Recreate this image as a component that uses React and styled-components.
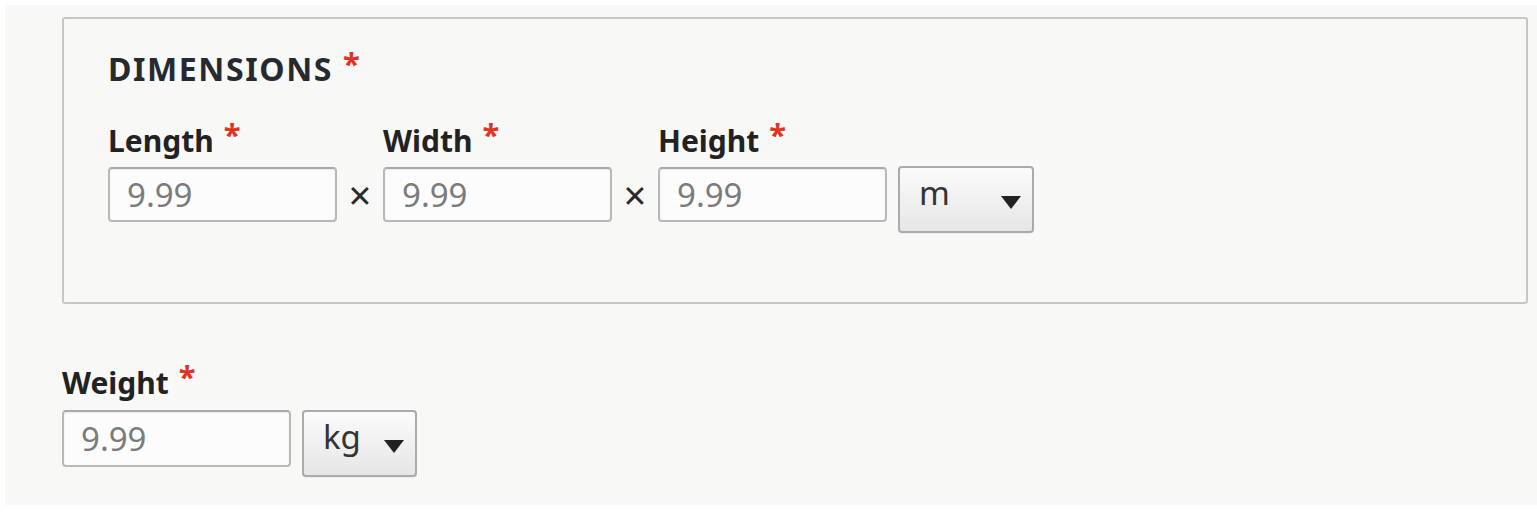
import React from 'react';
import styled, { createGlobalStyle } from 'styled-components';

const GlobalStyle = createGlobalStyle`
  html, body {
    margin: 0;
    padding: 0;
    background: #ffffff;
  }
  body {
    font-family: "Noto Sans", "Open Sans", "DejaVu Sans", sans-serif;
    color: #222;
  }
`;

const Page = styled.div`
  margin: 5px 0 0 5px;
  height: 500px;
  box-sizing: border-box;
  background: #f8f8f7;
  padding: 12px 9px 0 57px;
`;

const Fieldset = styled.div`
  box-sizing: border-box;
  height: 287px;
  border: 2px solid #c6c6c6;
  border-radius: 3px;
  padding: 30px 0 0 44px;
`;

const Legend = styled.div`
  font-size: 32px;
  line-height: 40px;
  font-weight: 700;
  letter-spacing: 0.05em;
  text-transform: uppercase;
  color: #262a30;
`;

const Required = styled.span`
  color: #e2331f;
  font-weight: 700;
  font-size: 31px;
  position: relative;
  top: -6px;
  margin-left: 10px;
  letter-spacing: 0;
`;

const DimensionRow = styled.div`
  display: flex;
  align-items: flex-start;
  margin-top: 33px;
`;

const Field = styled.div`
  display: flex;
  flex-direction: column;
  gap: 8px;
`;

const Label = styled.div`
  font-size: 30px;
  line-height: 36px;
  font-weight: 700;
  color: #222;
`;

const Input = styled.input`
  box-sizing: border-box;
  width: 229px;
  height: ${(p) => p.$h || 55}px;
  margin: 0;
  border: 2px solid #b9b9b9;
  border-top-color: #a9a9a9;
  border-radius: 4px;
  background: #fcfcfc;
  box-shadow: inset 0 1px 2px rgba(0, 0, 0, 0.08);
  padding: 0 0 0 17px;
  font-family: "Noto Sans", "Open Sans", sans-serif;
  font-size: 33px;
  color: #333;
  outline: none;

  &::placeholder {
    color: #7b7b7b;
  }
`;

const Times = styled.div`
  width: 46px;
  height: 55px;
  margin-top: 44px;
  display: flex;
  align-items: center;
  justify-content: center;
  font-size: 40px;
  line-height: 1;
  color: #2a2a2a;
  padding-top: 3px;
  box-sizing: border-box;
`;

const Select = styled.div`
  box-sizing: border-box;
  width: ${(p) => p.$w}px;
  height: 67px;
  margin-left: 11px;
  margin-top: ${(p) => p.$top || 0}px;
  border: 2px solid #ababab;
  border-radius: 4px;
  background: linear-gradient(to bottom, #fbfbfb 0%, #eeeeee 60%, #e6e6e6 100%);
  box-shadow: 0 1px 1px rgba(0, 0, 0, 0.05);
  display: flex;
  align-items: flex-start;
  justify-content: space-between;
  padding: 5px 11px 0 19px;
  font-size: 33px;
  line-height: 40px;
  color: #333;
`;

const Arrow = styled.span`
  width: 0;
  height: 0;
  margin-top: 23px;
  border-left: 10px solid transparent;
  border-right: 10px solid transparent;
  border-top: 13px solid #222;
`;

const WeightField = styled(Field)`
  margin-top: 60px;
  gap: 9px;
`;

const WeightRow = styled.div`
  display: flex;
  align-items: flex-start;
`;

export default function App() {
  return (
    <>
      <GlobalStyle />
      <Page>
        <Fieldset>
          <Legend>
            Dimensions<Required>*</Required>
          </Legend>
          <DimensionRow>
            <Field>
              <Label>Length<Required>*</Required></Label>
              <Input placeholder="9.99" />
            </Field>
            <Times>×</Times>
            <Field>
              <Label>Width<Required>*</Required></Label>
              <Input placeholder="9.99" />
            </Field>
            <Times>×</Times>
            <Field>
              <Label>Height<Required>*</Required></Label>
              <Input placeholder="9.99" />
            </Field>
            <Select $w={136} $top={44}>
              m<Arrow />
            </Select>
          </DimensionRow>
        </Fieldset>
        <WeightField>
          <Label>Weight<Required>*</Required></Label>
          <WeightRow>
            <Input placeholder="9.99" $h={57} />
            <Select $w={115}>
              kg<Arrow />
            </Select>
          </WeightRow>
        </WeightField>
      </Page>
    </>
  );
}
